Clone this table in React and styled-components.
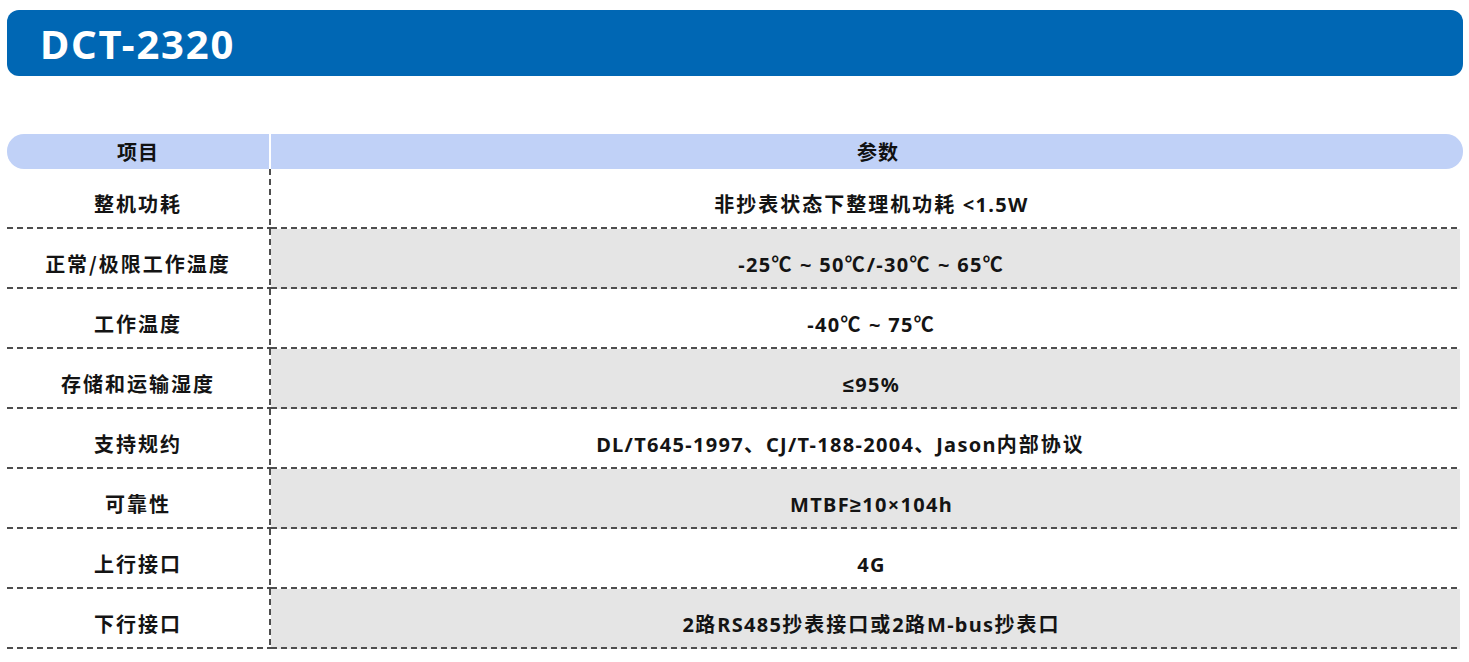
import React from 'react';
import styled, { createGlobalStyle } from 'styled-components';

const GlobalStyle = createGlobalStyle`
  html, body {
    margin: 0;
    padding: 0;
    background: #ffffff;
  }
  body {
    font-family: "Noto Sans", "Noto Sans CJK SC", sans-serif;
  }
`;

const DASH = '#4d4d4d';

const Page = styled.div`
  padding: 10px 6px 0 7px;
`;

const TitleBar = styled.div`
  height: 66px;
  background: #0067b4;
  border-radius: 12px;
  display: flex;
  align-items: center;
  padding-left: 33px;
`;

const Title = styled.h1`
  margin: 0;
  font-family: "Noto Sans", sans-serif;
  font-weight: 700;
  font-size: 40px;
  letter-spacing: 1.8px;
  color: #ffffff;
`;

const Table = styled.div`
  margin-top: 58px;
`;

const HeadRow = styled.div`
  display: grid;
  grid-template-columns: 264px 1fr;
  height: 35px;
`;

const HeadCell = styled.div`
  background: #c0d1f7;
  display: flex;
  align-items: center;
  justify-content: center;
  font-family: "Noto Sans CJK SC", sans-serif;
  font-weight: 700;
  font-size: 20px;
  letter-spacing: 1px;
  color: #111;
  border-radius: ${(p) => (p.$first ? '17px 0 0 17px' : '0 17px 17px 0')};
  border-right: ${(p) => (p.$first ? '2px solid #ffffff' : 'none')};
  padding-left: ${(p) => (p.$first ? '0' : '22px')};
`;

const Body = styled.div`
  display: grid;
  grid-template-columns: 264px 1fr;
  grid-auto-rows: 60px;
  margin-right: 3px;
`;

const hLine = `linear-gradient(to right, ${DASH} 6px, transparent 6px) left bottom / 10px 2px repeat-x`;
const vLine = `linear-gradient(to bottom, ${DASH} 6px, transparent 6px) right top / 2px 10px repeat-y`;

const Cell = styled.div`
  display: flex;
  align-items: center;
  justify-content: center;
  padding-top: 8px;
  font-family: "Noto Sans CJK SC", sans-serif;
  font-weight: 700;
  font-size: 20px;
  letter-spacing: 2px;
  color: #141414;
  white-space: pre;
`;

const LabelCell = styled(Cell)`
  background: ${hLine}, ${vLine};
  padding-right: 2px;
`;

const ValueCell = styled(Cell)`
  background: ${hLine}, ${(p) => (p.$shaded ? '#e5e5e5' : '#ffffff')};
  padding-left: 12px;
`;

const Text = styled.span`
  display: inline-block;
  padding-right: ${(p) => p.$trail || 0}px;
`;

// latin runs sit in a narrower face than the CJK glyphs
const Latin = styled.span`
  font-family: "Noto Sans", sans-serif;
  letter-spacing: 1.3px;
`;

const LATIN = /([\u0020-\u007e≤≥×]+)/;

const splitRuns = (text) =>
  text
    .split(LATIN)
    .filter(Boolean)
    .map((part, i) =>
      /^[\u0020-\u007e≤≥×]+$/.test(part) ? <Latin key={i}>{part}</Latin> : part
    );

const rows = [
  { label: '整机功耗', value: '非抄表状态下整理机功耗 <1.5W' },
  { label: '正常/极限工作温度', value: '-25℃ ~ 50℃/-30℃ ~ 65℃' },
  { label: '工作温度', value: '-40℃ ~ 75℃' },
  { label: '存储和运输湿度', value: '≤95%' },
  { label: '支持规约', value: 'DL/T645-1997、CJ/T-188-2004、Jason内部协议', trail: 62 },
  { label: '可靠性', value: 'MTBF≥10×104h' },
  { label: '上行接口', value: '4G' },
  { label: '下行接口', value: '2路RS485抄表接口或2路M-bus抄表口' },
];

export default function App() {
  return (
    <>
      <GlobalStyle />
      <Page>
        <TitleBar>
          <Title>DCT-2320</Title>
        </TitleBar>
        <Table>
          <HeadRow>
            <HeadCell $first>项目</HeadCell>
            <HeadCell>参数</HeadCell>
          </HeadRow>
          <Body>
            {rows.map((row, i) => (
              <React.Fragment key={row.label}>
                <LabelCell>{row.label}</LabelCell>
                <ValueCell $shaded={i % 2 === 1}>
                  <Text $trail={row.trail}>{splitRuns(row.value)}</Text>
                </ValueCell>
              </React.Fragment>
            ))}
          </Body>
        </Table>
      </Page>
    </>
  );
}
